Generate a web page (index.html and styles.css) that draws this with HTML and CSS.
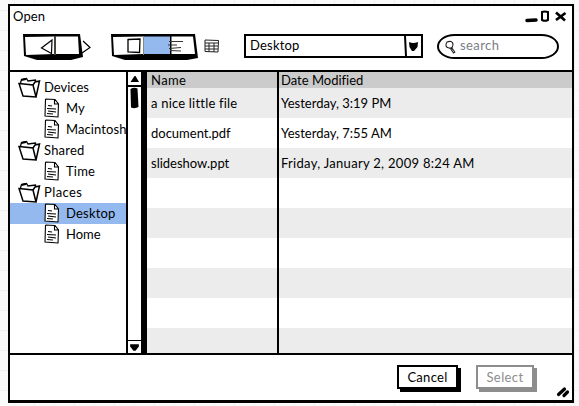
FILE: index.html
```html
<!DOCTYPE html>
<html lang="en">
<head>
<meta charset="utf-8">
<title>Open</title>
<link rel="stylesheet" href="styles.css">
</head>
<body>
<svg class="defs" aria-hidden="true">
  <symbol id="folder" viewBox="0 0 24 22"><path d="M2.500 6L3.500 2.500L8.500 1.500L10 4L17.500 3L18 6" fill="#fff" stroke="#000" stroke-width="1.300"/><path d="M3.200 3L8 2" stroke="#000" stroke-width="2"/><path d="M1 6.500L15 8L18 20L5 19ZM15 8L17 5L21.500 4L18 20" fill="#fff" stroke="#000" stroke-width="1.500"/></symbol>
  <symbol id="doc" viewBox="0 0 16 20"><path d="M1 1L11 1L15 6L14.500 19L1 18.500Z" fill="#fff"/><path d="M1.500 1L11 1.500L14.500 6L14 19L1 18L1.500 1M10.500 1.500V6H14.500M4 7.500L8 8M3 10.500L12 11M4 13L12 14M3 15.500L9 16" fill="none" stroke="#000" stroke-width="1.100"/></symbol>
</svg>
<main class="window">
  <header class="top">
    <div class="titlebar">
      <span class="title">Open</span>
      <svg class="controls" width="44" height="14" viewBox="0 0 44 14"><path d="M3 11.500L12 11" stroke="#000" stroke-width="3.500" stroke-linecap="round"/><path d="M18 3Q20.500 2 24 3L24 11Q21 12.500 18 11Z" fill="none" stroke="#000" stroke-width="2"/><path d="M32 3.500L41 11.500M41.500 4L32 11" stroke="#000" stroke-width="2.700"/></svg>
    </div>
    <div class="toolbar">
      <svg class="nav" width="70" height="28" viewBox="0 0 70 28">
        <path d="M0 1L57 1L60 24L48 27H14L1 23Z"/>
        <path d="M2 4L31 3.500V21L3 22ZM33 3.500H55L56 21H33Z" fill="#fff"/>
        <path d="M32 3V22" stroke="#8b8778"/>
        <path d="M29 7L18.500 15L28.500 20.500Z" fill="#fff" stroke="#000" stroke-width="1.200"/>
        <path d="M60 8L67 14.500L59 20" fill="none" stroke="#000" stroke-width="1.200"/>
      </svg>
      <svg class="views" width="90" height="28" viewBox="0 0 90 28">
        <path d="M0 1L84 1L87 25L76 27H14L1 23Z"/>
        <path d="M2 4L32 3.500V21L3 22ZM60 3.500H82L84 21H60Z" fill="#fff"/>
        <path d="M33 3.500H59V21H33Z" fill="#93b9ef"/>
        <path d="M32.500 3V22" stroke="#8b8778"/><path d="M60 3V22" stroke="#000"/>
        <path d="M17 6.500L29 6L28.500 19.500L17 19Z" fill="#fff" stroke="#000" stroke-width="1.300"/>
        <path d="M58 8.500L72 8.500M57 12H66M58 15.500L70 14.500M59 17.500L70 18" stroke="#333"/>
      </svg>
      <svg class="gridicon" width="16" height="14" viewBox="0 0 16 14"><path d="M1 1L14.500 1.500L14 13L1 12.500ZM1 4H14M1 7H14M1 10H14M5 4V13M10 4V13" fill="#fff" stroke="#222"/></svg>
      <div class="select"><span>Desktop</span><svg width="17" height="20" viewBox="0 0 17 20"><path d="M1 0L2 20" stroke="#000" stroke-width="2"/><path d="M5 6Q9 8 14 6L13.500 11L10 15L8 15L5.500 11Z"/></svg></div>
      <div class="search"><svg width="14" height="15" viewBox="0 0 14 15"><path d="M3 2Q8 0 9 4Q9 9 5 8Q0 7 3 2Z" fill="#fff" stroke="#222" stroke-width="1.100"/><path d="M7 8L10.500 13" stroke="#222" stroke-width="2.600"/><path d="M8 9.500L10 12" stroke="#fff" stroke-width=".7"/></svg><span>search</span></div>
    </div>
  </header>
  <section class="body">
    <aside class="sidebar">
      <ul class="tree">
        <li><svg class="folder"><use href="#folder"/></svg><span>Devices</span></li>
        <li class="child"><svg class="doc"><use href="#doc"/></svg><span>My</span></li>
        <li class="child"><svg class="doc"><use href="#doc"/></svg><span class="t-mac">Macintosh</span></li>
        <li><svg class="folder"><use href="#folder"/></svg><span class="t-wide">Shared</span></li>
        <li class="child"><svg class="doc"><use href="#doc"/></svg><span class="t-wide">Time</span></li>
        <li><svg class="folder"><use href="#folder"/></svg><span class="t-wider">Places</span></li>
        <li class="child selected"><svg class="doc"><use href="#doc"/></svg><span class="t-wide">Desktop</span></li>
        <li class="child"><svg class="doc"><use href="#doc"/></svg><span>Home</span></li>
      </ul>
      <div class="scrollbar">
        <svg class="arrow" width="12" height="11" viewBox="0 0 12 11"><path d="M2 8L6 2L7 2L10.500 8Z"/></svg>
        <svg class="thumb" width="12" height="24" viewBox="0 0 12 24"><path d="M1.500 2Q5 0 8.500 1.500L9.500 20Q6 22 2 20.500Z"/></svg>
        <svg class="arrow down" width="12" height="11" viewBox="0 0 12 11"><path d="M2 3H10V5L7 9H5L2 5Z"/></svg>
      </div>
    </aside>
    <div class="table">
      <div class="row head"><span class="t-wider">Name</span><span>Date Modified</span></div>
      <div class="row"><span class="t-file">a nice little file</span><span>Yesterday, 3:19 PM</span></div>
      <div class="row"><span>document.pdf</span><span>Yesterday, 7:55 AM</span></div>
      <div class="row"><span>slideshow.ppt</span><span class="t-long">Friday, January 2, 2009 8:24 AM</span></div>
      <div class="row"><span></span><span></span></div>
      <div class="row"><span></span><span></span></div>
      <div class="row"><span></span><span></span></div>
      <div class="row"><span></span><span></span></div>
      <div class="row"><span></span><span></span></div>
      <div class="row last"><span></span><span></span></div>
    </div>
  </section>
  <footer class="bottom">
    <button class="cancel">Cancel</button>
    <button class="choose" disabled>Select</button>
    <svg class="grip" width="14" height="12" viewBox="0 0 14 12"><path d="M2.500 8.500L8.500 3M8 9.500L11.500 6" stroke="#000" stroke-width="3.200" stroke-linecap="round"/></svg>
  </footer>
</main>
</body>
</html>
```

FILE: styles.css
```css
* { box-sizing: border-box; }
body {
  margin: 0;
  padding: 4px 0 0 8px;
  width: 579px;
  height: 406px;
  overflow: hidden;
  background-color: #fafafa;
  background-image: linear-gradient(90deg, #f1f1f1 1px, transparent 1px), linear-gradient(#f1f1f1 1px, transparent 1px);
  background-size: 20px 20px;
  background-position: 14px 10px;
  font: 13px/20px Lato, "Liberation Sans", sans-serif;
  font-variant-ligatures: none;
  color: #000;
}
.defs { position: absolute; width: 0; height: 0; }
svg { flex: none; display: block; }
.window { width: 566px; height: 399px; background: #fff; }
.top { height: 66px; border: solid #000; border-width: 2px 2px 0 2px; }
.titlebar { display: flex; justify-content: space-between; height: 25px; padding: 0 6px 0 3px; }
.title { letter-spacing: .1px; }
.controls { margin-top: 3px; margin-right: -2px; }
.toolbar { display: flex; align-items: flex-start; padding: 2px 0 0 13px; }
.views { margin-left: 18px; }
.gridicon { margin: 6px 0 0 3px; }
.select {
  display: flex;
  justify-content: space-between;
  width: 179px;
  height: 24px;
  margin: 1px 0 0 24px;
  padding-left: 4px;
  border: 2px solid #000;
  line-height: 19px;
  letter-spacing: .2px;
}
.search {
  display: flex;
  width: 122px;
  height: 25px;
  margin: 1px 0 0 14px;
  padding: 0 0 0 5px;
  border: 2px solid #000;
  border-radius: 18px / 13px;
  color: #7b7d85;
  line-height: 19px;
}
.search svg { margin-top: 4px; }
.search span { margin-left: 2px; letter-spacing: .4px; }
.body { display: flex; height: 285px; }
.sidebar { display: flex; width: 136px; border: solid #000; border-width: 2px 3px 2px 2px; }
.tree { width: 116px; flex: none; margin: 0; padding: 5px 0 0; list-style: none; overflow: hidden; }
.tree li { display: flex; height: 21px; line-height: 21px; padding-left: 8px; white-space: nowrap; }
.tree li.child { padding-left: 34px; }
.tree li.selected { background: #93b9ef; }
.folder { width: 24px; height: 22px; margin-right: 2px; }
.doc { width: 16px; height: 20px; margin-right: 6px; }
.t-mac { letter-spacing: .1px; }
.t-wide { letter-spacing: .2px; }
.t-wider { letter-spacing: .4px; }
.t-file { letter-spacing: .2px; }
.t-long { letter-spacing: .3px; }
.scrollbar { display: flex; flex-direction: column; flex: 1; border-left: 2px solid #000; }
.arrow { height: 13px; width: 100%; border-bottom: 2px solid #000; margin-top: 2px; }
.thumb { margin-left: 1px; }
.down { margin-top: auto; border-bottom: 0; border-top: 1px solid #000; }
.table { flex: 1; border: solid #000; border-width: 2px 2px 2px 3px; }
.row { display: flex; height: 30px; line-height: 30px; white-space: nowrap; }
.row:nth-child(even) { background: #ececec; }
.row.head { height: 16px; line-height: 17px; background: #cbcbcb; }
.row.last { height: 25px; }
.row span:first-child { width: 132px; padding-left: 4px; border-right: 2px solid #000; }
.row span:last-child { padding-left: 2px; }
.bottom { display: flex; height: 48px; padding: 10px 0 0 387px; border: solid #000; border-width: 0 2px 3px 2px; }
button { font: 13px/19px Lato, sans-serif; height: 24px; padding: 0; background: #fff; border: 2px solid #000; color: #000; }
.cancel { width: 61px; box-shadow: 3px 3px 0 #000; letter-spacing: .3px; }
.choose { width: 58px; margin-left: 18px; border-color: #8d8d8d; color: #8d8d8d; box-shadow: 3px 3px 0 #8d8d8d; letter-spacing: .4px; }
.grip { margin: 21px 0 0 22px; }
```
